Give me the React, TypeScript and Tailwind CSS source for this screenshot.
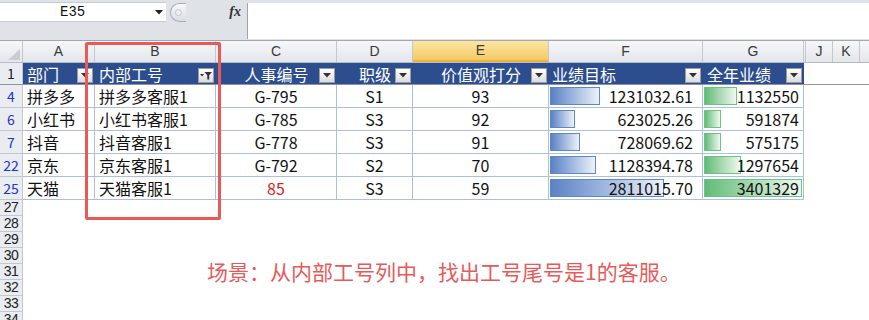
import React from 'react';

type Col = { key: string; w: string; hl?: boolean };

const cols: Col[] = [
    { key: 'A', w: 'w-[72px]' },
    { key: 'B', w: 'w-[121px]' },
    { key: 'C', w: 'w-[121px]' },
    { key: 'D', w: 'w-[76px]' },
    { key: 'E', w: 'w-[136px]', hl: true },
    { key: 'F', w: 'w-[154px]' },
    { key: 'G', w: 'w-[101px]' },
];

type Row = { n: number; a: string; b: string; c: string; cRed?: boolean; d: string; e: number; f: string; fv: number; g: number };

const rows: Row[] = [
    { n: 4, a: '拼多多', b: '拼多多客服1', c: 'G-795', d: 'S1', e: 93, f: '1231032.61', fv: 1231032.61, g: 1132550 },
    { n: 6, a: '小红书', b: '小红书客服1', c: 'G-785', d: 'S3', e: 92, f: '623025.26', fv: 623025.26, g: 591874 },
    { n: 7, a: '抖音', b: '抖音客服1', c: 'G-778', d: 'S3', e: 91, f: '728069.62', fv: 728069.62, g: 575175 },
    { n: 22, a: '京东', b: '京东客服1', c: 'G-792', d: 'S2', e: 70, f: '1128394.78', fv: 1128394.78, g: 1297654 },
    { n: 25, a: '天猫', b: '天猫客服1', c: '85', cRed: true, d: 'S3', e: 59, f: '2811015.70', fv: 2811015.7, g: 3401329 },
];

const fMax = 2811015.7;
const gMax = 3401329;

const FilterBtn: React.FC<{ funnel?: boolean }> = ({ funnel }) => (
    <span className="absolute right-[2px] top-[5px] w-[16px] h-[15px] border border-[#9c9c9c] bg-gradient-to-b from-white to-[#dcdcdc] flex items-center justify-center">
        {funnel ? (
            <svg width="12" height="9" viewBox="0 0 12 9">
                <polygon points="0,3 4,3 2,5.5" fill="#333" />
                <polygon points="4.5,1 12,1 9.2,4.2 9.2,8.5 7.3,8.5 7.3,4.2" fill="#333" />
            </svg>
        ) : (
            <svg width="8" height="5" viewBox="0 0 8 5">
                <polygon points="0,0 8,0 4,4.5" fill="#333" />
            </svg>
        )}
    </span>
);

const App: React.FC = () => {
    return (
        <div className="relative w-[869px] h-[320px] overflow-hidden bg-white font-['Noto_Sans_CJK_SC',sans-serif] text-[#111]">
            {/* formula bar */}
            <div className="flex h-[41px] bg-[#dfe2e7] border-b border-[#a2a8b0] pt-[2px]">
                <div className="w-[247px] shrink-0">
                    <div className="flex items-center h-[20px]">
                        <div className="w-[166px] h-full bg-white border-y border-[#c6cad1] flex items-center">
                            <span className="ml-[60px] font-['Liberation_Mono',monospace] text-[14px] leading-none">E35</span>
                            <svg className="ml-auto mr-[3px]" width="8" height="5" viewBox="0 0 8 5">
                                <polygon points="0,0 8,0 4,4.5" fill="#222" />
                            </svg>
                        </div>
                        <div className="ml-[4px] w-[16px] h-[19px] rounded-l-full border border-r-0 border-[#a8adb5] bg-gradient-to-b from-[#f7f8fa] to-[#d9dde3] flex items-center justify-center">
                            <span className="w-[7px] h-[7px] rounded-full border border-[#c2c6cc] bg-[#eceef1]" />
                        </div>
                        <span className="ml-auto mr-[6px] font-['Liberation_Serif',serif] italic font-bold text-[14px] text-[#333] leading-none">fx</span>
                    </div>
                </div>
                <div className="flex-1 mt-[1px] mb-[1px] bg-white border-l border-[#9ea4ac]" />
            </div>

            {/* column headers */}
            <div className="flex h-[22px] border-b border-[#b7bcc4] bg-gradient-to-b from-[#f6f7f9] to-[#e3e6ea] font-['Liberation_Sans',sans-serif] text-[14px] text-[#3a3a3a]">
                <div className="w-[23px] shrink-0 border-r border-[#c3c8cf] flex items-end justify-end p-[2px]">
                    <svg width="12" height="11" viewBox="0 0 12 11">
                        <polygon points="12,0 12,11 0,11" fill="#c9cdd3" />
                    </svg>
                </div>
                {cols.map((c) => (
                    <div
                        key={c.key}
                        className={`${c.w} shrink-0 border-r border-[#c3c8cf] flex items-center justify-center ${c.hl ? 'bg-gradient-to-b from-[#fce6a4] to-[#f5c963] border-b-2 border-b-[#f0b23a]' : ''}`}
                    >
                        {c.key}
                    </div>
                ))}
                <div className="w-[2px] shrink-0 border-r border-[#c3c8cf]" />
                <div className="w-[27px] shrink-0 border-r border-[#c3c8cf] flex items-center justify-center">J</div>
                <div className="w-[27px] shrink-0 border-r border-[#c3c8cf] flex items-center justify-center">K</div>
                <div className="flex-1" />
            </div>

            {/* table header row */}
            <div className="flex h-[22px] border-b border-[#8e949c] text-[16px]">
                <div className="w-[23px] shrink-0 bg-[#e9ecf0] border-r border-[#c3c8cf] flex items-center justify-center text-[14px] text-[#222]">1</div>
                <div className="flex bg-[#2d4e8e] text-white">
                    <div className="relative w-[72px] shrink-0 flex items-center pl-[4px]">部门<FilterBtn /></div>
                    <div className="relative w-[121px] shrink-0 flex items-center pl-[4px]">内部工号<FilterBtn funnel /></div>
                    <div className="relative w-[121px] shrink-0 flex items-center justify-center">人事编号<FilterBtn /></div>
                    <div className="relative w-[76px] shrink-0 flex items-center justify-center">职级<FilterBtn /></div>
                    <div className="relative w-[136px] shrink-0 flex items-center justify-center">价值观打分<FilterBtn /></div>
                    <div className="relative w-[154px] shrink-0 flex items-center pl-[3px]">业绩目标<FilterBtn /></div>
                    <div className="relative w-[101px] shrink-0 flex items-center pl-[4px]">全年业绩<FilterBtn /></div>
                </div>
                <div className="flex-1" />
            </div>

            {/* data rows */}
            {rows.map((r) => (
                <div key={r.n} className="flex h-[23px] text-[16px]">
                    <div className="w-[23px] shrink-0 bg-[#e9ecf0] border-r border-b border-[#c3c8cf] flex items-center justify-center text-[14px] text-[#2233cc]">
                        {r.n}
                    </div>
                    <div className="w-[72px] shrink-0 border-r border-b border-[#a9c1de] flex items-center pl-[4px]">{r.a}</div>
                    <div className="w-[121px] shrink-0 border-r border-b border-[#a9c1de] flex items-center pl-[4px]">{r.b}</div>
                    <div className={`w-[121px] shrink-0 border-r border-b border-[#a9c1de] flex items-center justify-center ${r.cRed ? 'text-[#e02020]' : ''}`}>{r.c}</div>
                    <div className="w-[76px] shrink-0 border-r border-b border-[#a9c1de] flex items-center justify-center">{r.d}</div>
                    <div className="w-[136px] shrink-0 border-r border-b border-[#a9c1de] flex items-center justify-center">{r.e}</div>
                    <div className="relative w-[154px] shrink-0 border-r border-b border-[#a9c1de] flex items-center justify-end pr-[9px]">
                        <span
                            className="absolute left-[1px] top-[2px] bottom-[2px] border border-[#5f86c5] bg-gradient-to-r from-[#5a82c3] to-[#eef2f9]"
                            style={{ width: `${Math.round((r.fv / fMax) * 114)}px` }}
                        />
                        <span className="relative">{r.f}</span>
                    </div>
                    <div className="relative w-[101px] shrink-0 border-r border-b border-[#a9c1de] flex items-center justify-end pr-[4px]">
                        <span
                            className="absolute left-[1px] top-[2px] bottom-[2px] border border-[#6cc482] bg-gradient-to-r from-[#5fbb77] to-[#eef8f0]"
                            style={{ width: `${Math.round((r.g / gMax) * 98)}px` }}
                        />
                        <span className="relative">{r.g}</span>
                    </div>
                    <div className="flex-1" />
                </div>
            ))}

            {/* empty rows */}
            {[27, 28, 29, 30, 31, 32, 33, 34].map((n) => (
                <div key={n} className="flex h-[16px]">
                    <div className="w-[23px] shrink-0 bg-[#e9ecf0] border-r border-b border-[#c3c8cf] flex items-center justify-center font-['Liberation_Sans',sans-serif] text-[14px] leading-[15px] text-[#222] tracking-[-0.5px]">
                        {n}
                    </div>
                    <div className="flex-1" />
                </div>
            ))}

            {/* highlight around column B */}
            <div className="absolute left-[85px] top-[42px] w-[136px] h-[178px] border-[3px] border-[#eb5858] rounded-[2px] pointer-events-none" />

            {/* note */}
            <div className="absolute left-[207px] top-[261px] text-[21px] leading-[21px] text-[#e65a5a]">
                场景：从内部工号列中，找出工号尾号是1的客服。
            </div>
        </div>
    );
};

export default App;
